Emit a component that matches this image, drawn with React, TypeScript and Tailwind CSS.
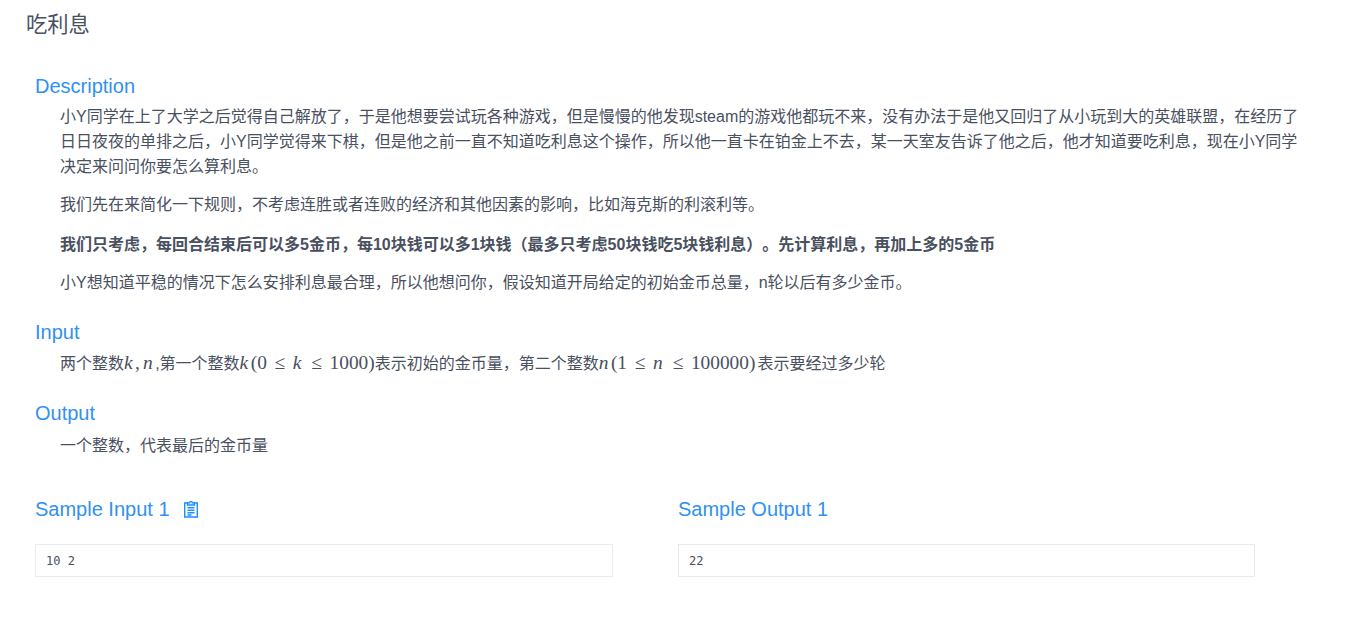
const sans = "font-['Liberation_Sans','Noto_Sans_CJK_SC',sans-serif]";

function M({ children }: { children: React.ReactNode }) {
  return <span className="font-['Liberation_Serif',serif] text-[19.36px]">{children}</span>;
}
function V({ children }: { children: React.ReactNode }) {
  return <i className="font-['Liberation_Serif',serif] text-[19.36px] pr-[2.5px]">{children}</i>;
}
function Le() {
  return <span className="font-['Liberation_Serif',serif] text-[19.36px] mx-[7.6px]">≤</span>;
}
function H({ children }: { children: React.ReactNode }) {
  return <p className="text-[20px] leading-[30px] text-[#3091f2]">{children}</p>;
}
function Clip() {
  return (
    <svg width="16" height="18" viewBox="0 0 16 18" fill="none" stroke="#1a8fff" strokeWidth="1.4">
      <path d="M4.5 3H1.7v14h12.6V3h-2.8" />
      <path d="M4.5 5V2.7h2.2a1.3 1.3 0 0 1 2.6 0h2.2V5z" />
      <path d="M4.5 7.7h7M4.5 10.2h7M4.5 12.7h7M4.5 15h4" />
    </svg>
  );
}

export default function App() {
  return (
    <div className={`${sans} [text-spacing-trim:space-all] min-h-[624px] bg-white text-[#495060] pl-[26px] pr-[40px] pt-[10px]`}>
      <h1 className="text-[21.3px] leading-[30px] font-normal">吃利息</h1>
      <div className="pl-[9px] pt-[31px]">
        <H>Description</H>
        <div className="pl-[25px] text-[16px] leading-[25px] pt-[3px]">
          <p>小Y同学在上了大学之后觉得自己解放了，于是他想要尝试玩各种游戏，但是慢慢的他发现steam的游戏他都玩不来，没有办法于是他又回归了从小玩到大的英雄联盟，在经历了日日夜夜的单排之后，小Y同学觉得来下棋，但是他之前一直不知道吃利息这个操作，所以他一直卡在铂金上不去，某一天室友告诉了他之后，他才知道要吃利息，现在小Y同学决定来问问你要怎么算利息。</p>
          <p className="mt-[13px]">我们先在来简化一下规则，不考虑连胜或者连败的经济和其他因素的影响，比如海克斯的利滚利等。</p>
          <p className="mt-[15px] font-bold">我们只考虑，每回合结束后可以多5金币，每10块钱可以多1块钱（最多只考虑50块钱吃5块钱利息）。先计算利息，再加上多的5金币</p>
          <p className="mt-[13px]">小Y想知道平稳的情况下怎么安排利息最合理，所以他想问你，假设知道开局给定的初始金币总量，n轮以后有多少金币。</p>
        </div>
        <div className="mt-[22px]">
          <H>Input</H>
          <p className="pl-[25px] text-[16px] leading-[32px]">
            两个整数<V>k</V><M>,</M><span className="ml-[3px]" /><V>n</V>,第一个整数<V>k</V><M>(0</M><Le /><V>k</V><Le /><M>1000)</M>表示初始的金币量，第二个整数<V>n</V><M>(1</M><Le /><V>n</V><Le /><M>100000)</M><span className="ml-[2px]" />表示要经过多少轮
          </p>
        </div>
        <div className="mt-[18px]">
          <H>Output</H>
          <p className="mt-[2px] pl-[25px] text-[16px] leading-[32px]">一个整数，代表最后的金币量</p>
        </div>
        <div className="mt-[32px] flex gap-[65px]">
          <div className="w-[578px]">
            <div className="flex items-center gap-[13px]">
              <H>Sample Input 1</H>
              <Clip />
            </div>
            <pre className="mt-[20px] h-[33px] border border-[#e9eaec] pl-[10px] pt-[8px] font-['DejaVu_Sans_Mono','Liberation_Mono',monospace] text-[12px] leading-[17px]">10 2</pre>
          </div>
          <div className="w-[577px]">
            <H>Sample Output 1</H>
            <pre className="mt-[20px] h-[33px] border border-[#e9eaec] pl-[10px] pt-[8px] font-['DejaVu_Sans_Mono','Liberation_Mono',monospace] text-[12px] leading-[17px]">22</pre>
          </div>
        </div>
      </div>
    </div>
  );
}
